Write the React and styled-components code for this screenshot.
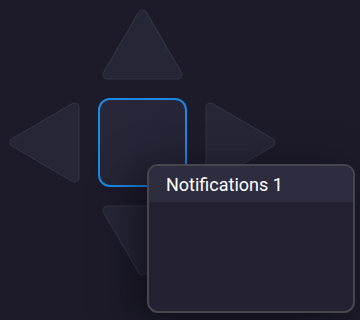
import React from "react";
import styled, { createGlobalStyle } from "styled-components";

const GlobalStyle = createGlobalStyle`
  html, body {
    margin: 0;
    padding: 0;
    background: #1d1b2a;
    font-family: Roboto, "Liberation Sans", sans-serif;
  }
`;

const Page = styled.div`
  position: relative;
  width: 360px;
  height: 320px;
  overflow: hidden;
  background: #1d1b2a;
`;

const Pad = styled.div`
  display: grid;
  grid-template-columns: 71px 89px 71px;
  grid-template-rows: 71px 89px 71px;
  gap: 18px 18px;
  padding: 9px 0 0 9px;
  width: fit-content;
`;

const Cell = styled.div`
  display: flex;
  align-items: ${(p) => p.$align || "center"};
  justify-content: ${(p) => p.$justify || "center"};
`;

const Center = styled.div`
  width: 89px;
  height: 89px;
  box-sizing: border-box;
  border: 2px solid #1e88e5;
  border-radius: 12px;
  background: linear-gradient(135deg, #29283b, #232233);
`;

const Arrow = ({ dir }) => {
  // base shape points up; rotate for others
  const rot = { up: 0, right: 90, down: 180, left: 270 }[dir];
  const vertical = dir === "up" || dir === "down";
  const w = vertical ? 81 : 71;
  const h = vertical ? 71 : 81;
  const pts = "40.5,5.5 75.5,65.5 5.5,65.5";
  return (
    <svg width={w} height={h} viewBox={`0 0 ${w} ${h}`}>
      <g
        transform={
          vertical
            ? `rotate(${rot} 40.5 35.5)`
            : `translate(-5 5) rotate(${rot} 40.5 35.5)`
        }
      >
        <polygon points={pts} fill="#363545" stroke="#363545" strokeWidth="10" strokeLinejoin="round" />
        <polygon points={pts} fill="#272637" stroke="#272637" strokeWidth="8" strokeLinejoin="round" />
      </g>
    </svg>
  );
};

const Popup = styled.div`
  position: absolute;
  left: 147px;
  top: 164px;
  width: 208px;
  height: 149px;
  box-sizing: border-box;
  border: 2px solid #47464f;
  border-radius: 11px;
  background: #242232;
  overflow: hidden;
  box-shadow: -12px 8px 40px rgba(8, 6, 14, 0.55);
`;

const Header = styled.div`
  height: 36px;
  background: #2e2d40;
  color: #ffffff;
  font-size: 18px;
  line-height: 36px;
  padding-left: 17px;
  padding-top: 1px;
  box-sizing: border-box;
`;

export default function App() {
  return (
    <Page>
      <GlobalStyle />
      <Pad>
        <Cell />
        <Cell $align="flex-start">
          <Arrow dir="up" />
        </Cell>
        <Cell />
        <Cell $justify="flex-start">
          <Arrow dir="left" />
        </Cell>
        <Cell>
          <Center />
        </Cell>
        <Cell $justify="flex-start">
          <Arrow dir="right" />
        </Cell>
        <Cell />
        <Cell $align="flex-start">
          <Arrow dir="down" />
        </Cell>
        <Cell />
      </Pad>
      <Popup>
        <Header>Notifications 1</Header>
      </Popup>
    </Page>
  );
}
